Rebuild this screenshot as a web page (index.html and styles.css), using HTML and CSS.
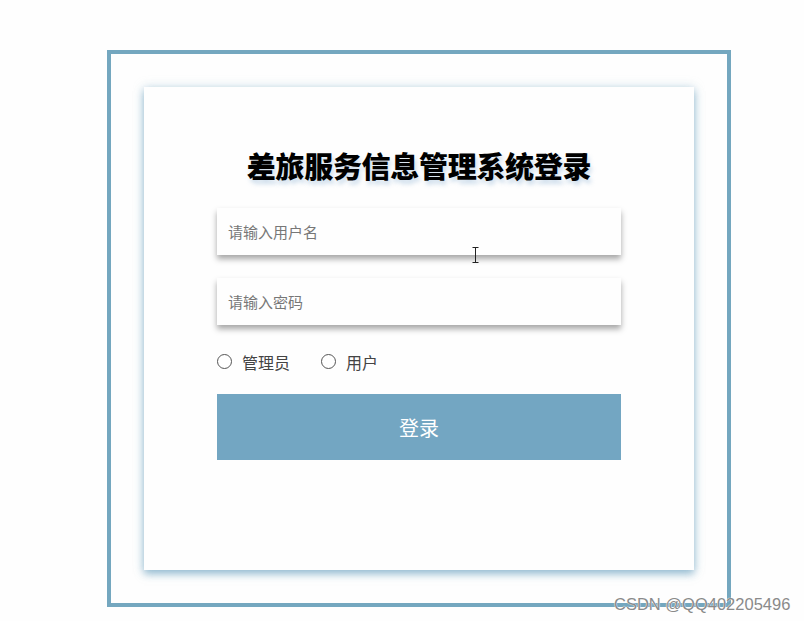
FILE: index.html
```html
<!DOCTYPE html>
<html lang="zh-CN">

<head>
    <meta charset="UTF-8">
    <title>差旅服务信息管理系统登录</title>
    <link rel="stylesheet" href="styles.css">
</head>

<body>
    <div class="page">
        <div class="frame">
            <div class="card">
                <h1 class="title">差旅服务信息管理系统登录</h1>
                <form class="login-form">
                    <div class="field">
                        <input type="text" placeholder="请输入用户名">
                    </div>
                    <div class="field">
                        <input type="password" placeholder="请输入密码">
                    </div>
                    <div class="roles">
                        <label class="role"><input type="radio" name="role"> 管理员</label>
                        <label class="role"><input type="radio" name="role"> 用户</label>
                    </div>
                    <button type="button" class="login-btn">登录</button>
                </form>
            </div>
        </div>
    </div>
    <!-- マウスカーソル -->
    <svg class="cursor" width="7" height="16" viewBox="0 0 7 16">
        <path d="M0.5 0.5h6M3.5 0.5v15M0.5 15.5h6" stroke="#222" stroke-width="1" fill="none" />
    </svg>
    <div class="watermark">CSDN @QQ402205496</div>
</body>

</html>
```

FILE: styles.css
```css
body {
    margin: 0;
    background-color: #fefefe;
    font-family: "Noto Sans CJK SC", "Liberation Sans", sans-serif;
}

.page {
    padding: 50px 0 0 107px;
}

.frame {
    box-sizing: border-box;
    width: 624px;
    height: 557px;
    border: 4px solid #74a7bf;
    padding: 33px;
}

.card {
    box-sizing: border-box;
    width: 550px;
    height: 483px;
    background: #fefefe;
    box-shadow: 0 4px 8px rgba(105, 160, 190, 0.65), 0 0 10px rgba(150, 185, 205, 0.35);
    padding-top: 58px;
}

.title {
    margin: 0 0 23px;
    text-align: center;
    font-size: 29px;
    line-height: 40px;
    font-weight: 900;
    color: #000;
    letter-spacing: -0.3px;
    text-shadow: 2px 4px 4px rgba(150, 185, 215, 0.45);
}

.login-form {
    width: 404px;
    margin: 0 auto;
}

.field {
    margin-bottom: 23px;
}

.field input {
    box-sizing: border-box;
    width: 100%;
    height: 47px;
    border: none;
    outline: none;
    padding: 0 11px;
    font-size: 15px;
    font-family: inherit;
    color: #333;
    background: #fefefe;
    box-shadow: 0 4px 6px rgba(0, 0, 0, 0.35);
}

.field input::placeholder {
    color: #777;
}

.roles {
    display: flex;
    gap: 31px;
    height: 27px;
    align-items: center;
    font-size: 16px;
    color: #444;
}

.role {
    display: flex;
    align-items: center;
    gap: 10px;
}

.role input {
    appearance: none;
    width: 15px;
    height: 15px;
    margin: 0;
    border: 1px solid #555;
    border-radius: 50%;
    background: #fff;
}

.login-btn {
    display: block;
    width: 100%;
    height: 66px;
    margin-top: 19px;
    border: none;
    background: #73a6c2;
    color: #fff;
    font-size: 20px;
    font-family: inherit;
    cursor: pointer;
}

.cursor {
    position: absolute;
    left: 472px;
    top: 247px;
}

.watermark {
    position: absolute;
    left: 614px;
    top: 595px;
    font-family: "Liberation Sans", sans-serif;
    font-size: 16.5px;
    color: #8a8a8a;
    text-shadow: 0 0 1px #fff, 0 0 1px #fff;
}
```
